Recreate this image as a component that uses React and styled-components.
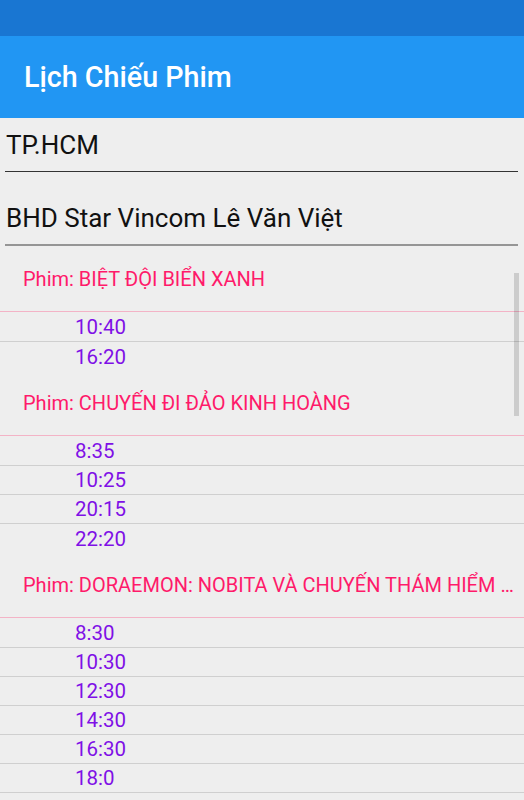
import React from 'react';
import styled, { createGlobalStyle } from 'styled-components';

const GlobalStyle = createGlobalStyle`
    html, body {
        margin: 0;
        padding: 0;
        background: #eeeeee;
    }
    * {
        box-sizing: border-box;
    }
`

const Screen = styled.div`
    display: flex;
    flex-direction: column;
    width: 524px;
    height: 800px;
    overflow: hidden;
    background: #eeeeee;
    font-family: Roboto, "Noto Sans", sans-serif;
`
const StatusBar = styled.div`
    height: 36px;
    flex-shrink: 0;
    background: #1976d2;
`
const AppBar = styled.div`
    height: 82px;
    flex-shrink: 0;
    display: flex;
    align-items: center;
    padding-left: 24px;
    background: #2196f3;
    color: #ffffff;
    font-size: 28.7px;
    font-weight: 500;
`
const Spinner = styled.div`
    display: flex;
    align-items: center;
    height: ${props => props.$thick ? 55 : 54}px;
    margin: ${props => props.$gap}px 6px 0 5px;
    padding-left: 1px;
    border-bottom: ${props => props.$thick ? '2px solid #959595' : '1px solid #333333'};
    font-size: 26px;
    color: #111111;
    flex-shrink: 0;
`
const ListArea = styled.div`
    position: relative;
    flex: 1;
    overflow: hidden;
    padding-top: 1px;
`
const MovieHeader = styled.div`
    display: flex;
    align-items: center;
    height: 65px;
    padding: 0 4px 0 23px;
    border-bottom: 1px solid #f3b3c6;
    color: #ff1a6a;
    font-size: 20px;
    white-space: nowrap;
    overflow: hidden;
`
const TimeList = styled.div`
    padding-top: 1px;
`
const TimeRow = styled.div`
    display: flex;
    align-items: center;
    height: 29px;
    padding-left: 75px;
    border-bottom: ${props => props.$last ? 'none' : '1px solid #cfcfcf'};
    color: #7f10e6;
    font-size: 20.5px;
`
const ScrollThumb = styled.div`
    position: absolute;
    right: 5px;
    top: 27px;
    width: 5px;
    height: 143px;
    background: rgba(0, 0, 0, 0.14);
`

const movies = [
    { title: 'Phim: BIỆT ĐỘI BIỂN XANH', times: ['10:40', '16:20'] },
    { title: 'Phim: CHUYẾN ĐI ĐẢO KINH HOÀNG', times: ['8:35', '10:25', '20:15', '22:20'] },
    {
        title: 'Phim: DORAEMON: NOBITA VÀ CHUYẾN THÁM HIỂM …',
        times: ['8:30', '10:30', '12:30', '14:30', '16:30', '18:0'],
        more: true
    }
]

export default function App() {
    return (
        <>
            <GlobalStyle />
            <Screen>
                <StatusBar />
                <AppBar>Lịch Chiếu Phim</AppBar>
                <Spinner $gap={0}>TP.HCM</Spinner>
                <Spinner $gap={19} $thick>BHD Star Vincom Lê Văn Việt</Spinner>
                <ListArea>
                    {movies.map((movie) => (
                        <React.Fragment key={movie.title}>
                            <MovieHeader>{movie.title}</MovieHeader>
                            <TimeList>
                                {movie.times.map((time, index) => (
                                    <TimeRow
                                        key={time}
                                        $last={!movie.more && index === movie.times.length - 1}
                                    >
                                        {time}
                                    </TimeRow>
                                ))}
                            </TimeList>
                        </React.Fragment>
                    ))}
                    <ScrollThumb />
                </ListArea>
            </Screen>
        </>
    );
}
